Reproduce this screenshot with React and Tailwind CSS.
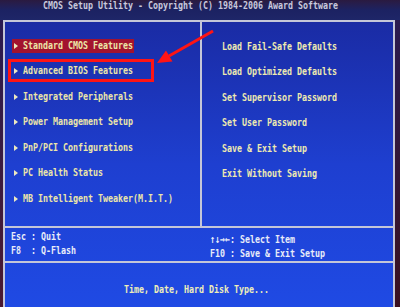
import React from "react";

const F = "font-['DejaVu_Sans_Mono',monospace] font-bold text-[11px] leading-[14px]";

function T({ children, className = "" }) {
  return (
    <span className={`block whitespace-pre origin-left scale-x-[0.755] ${F} ${className}`}>
      {children}
    </span>
  );
}

function Tri() {
  return (
    <span className="block w-0 h-0 border-y-[3.5px] border-y-transparent border-l-[4px] border-l-[#ece8c0]" />
  );
}

const left = [
  "Standard CMOS Features",
  "Advanced BIOS Features",
  "Integrated Peripherals",
  "Power Management Setup",
  "PnP/PCI Configurations",
  "PC Health Status",
  "MB Intelligent Tweaker(M.I.T.)",
];

const right = [
  "Load Fail-Safe Defaults",
  "Load Optimized Defaults",
  "Set Supervisor Password",
  "Set User Password",
  "Save & Exit Setup",
  "Exit Without Saving",
];

export default function App() {
  return (
    <div className="relative w-[400px] h-[307px] overflow-hidden flex flex-col bg-[#1c2260]">
      {/* title bar */}
      <div className="h-[20px] shrink-0 pl-[43px] flex items-start bg-gradient-to-b from-[#2a1a40] via-[#1c2262] to-[#1e2668]">
        <T className="text-[#c8c8dc] -mt-[1px]">CMOS Setup Utility - Copyright (C) 1984-2006 Award Software</T>
      </div>
      <div className="flex flex-1">
        <div className="w-[3px] bg-gradient-to-b from-[#2a1a50] to-[#4a1830]" />
        <div className="w-[392px] flex flex-col border-l-2 border-t-2 border-r-2 border-[#c4c6d8] bg-gradient-to-b from-[#1a2ba4] via-[#1e3fd0] to-[#1f4ae4]">
          {/* main */}
          <div className="flex h-[204px]">
            <div className="w-[197px] border-r-2 border-[#c4c6d8] flex flex-col pt-[11px]">
              {left.map((t, i) => (
                <div key={t} className="h-[25.5px] flex items-center pl-[7px]">
                  <div className={`h-[14px] w-[122px] flex items-center pl-[2px] ${i === 0 ? "bg-[#a3122e]" : ""}`}>
                    <Tri />
                    <div className="ml-[5px] text-[#ece6a8] flex">
                      <T>{t}</T>
                    </div>
                  </div>
                </div>
              ))}
            </div>
            <div className="flex-1 flex flex-col pt-[12px] pl-[20px]">
              {right.map((t) => (
                <div key={t} className="h-[25.5px] flex items-center text-[#eeeab0]">
                  <T>{t}</T>
                </div>
              ))}
            </div>
          </div>
          {/* footer keys */}
          <div className="h-[37px] border-t-2 border-b-2 border-[#c4c6d8] flex text-[#e8ecf8]">
            <div className="w-[199px] pl-[6px] pt-[2px] flex flex-col">
              <T>Esc : Quit</T>
              <T>F8  : Q-Flash</T>
            </div>
            <div className="flex-1 pl-[6px] pt-[5px] flex flex-col">
              <T className="leading-[12px]">↑↓→←: Select Item</T>
              <T className="leading-[12px]">F10 : Save &amp; Exit Setup</T>
            </div>
          </div>
          {/* help line */}
          <div className="flex-1 pl-[119px] pt-[20px] flex items-start text-[#eeeeb8]">
            <T>Time, Date, Hard Disk Type...</T>
          </div>
        </div>
        <div className="flex-1 bg-gradient-to-b from-[#2a1a50] to-[#3a1020]" />
      </div>

      {/* annotation: red box */}
      <div className="absolute left-[8px] top-[59px] w-[146px] h-[23px] border-[3px] border-[#ff1414]" />
      {/* annotation: red arrow */}
      <svg className="absolute left-0 top-0" width="400" height="307" viewBox="0 0 400 307">
        <line x1="213" y1="31" x2="169" y2="56" stroke="#ff1414" strokeWidth="3" />
        <polygon points="157,63 166,50.5 172.5,61.5" fill="#ff1414" />
      </svg>
    </div>
  );
}
